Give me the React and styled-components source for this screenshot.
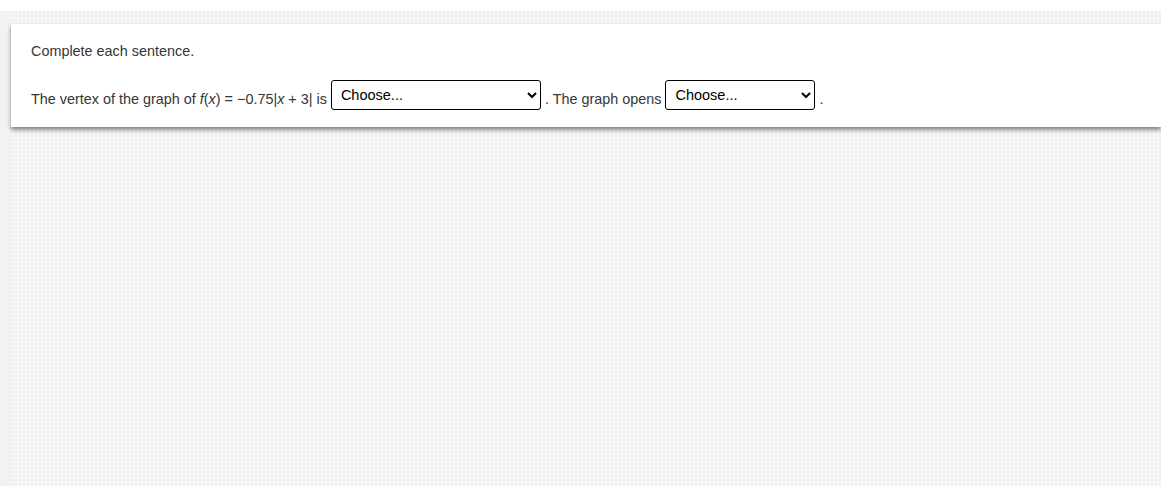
import React from 'react';
import styled, { createGlobalStyle } from 'styled-components';

const Global = createGlobalStyle`
html, body {
margin: 0;
padding: 0;
background: #ffffff;
}
body {
font-family: "Liberation Sans", Arial, sans-serif;
}
`

const Page = styled.div`
padding-top: 11px;
background: #ffffff;
height: 486px;
box-sizing: border-box;
overflow: hidden;
`

const Frame = styled.div`
display: flex;
height: 100%;
`

const Rail = styled.div`
width: 11px;
flex-shrink: 0;
background: #f2f2f2;
`

const Main = styled.div`
flex: 1;
padding-top: 12px;
background-color: #f4f4f4;
background-image:
  radial-gradient(circle at 1px 1px, #eeeeee 0.7px, transparent 1px),
  radial-gradient(circle at 3px 3px, #f9f9f9 0.7px, transparent 1px);
background-size: 4px 4px;
`

const Card = styled.div`
background: #ffffff;
padding: 19px 20px 17px 20px;
border-top: 1px solid #ececec;
box-shadow: 0 3px 4px rgba(0, 0, 0, 0.45);
color: #363636;
font-size: 14.4px;
`

const Prompt = styled.p`
margin: 0 0 20px 0;
line-height: 17px;
`

const Row = styled.div`
display: flex;
align-items: center;
white-space: pre;
line-height: 17px;
`

const Text = styled.span`
margin-top: 8px;
`

const Var = styled.i`
font-style: italic;
`

const Select = styled.select`
width: ${p => p.w}px;
height: 30px;
margin: 0 4px;
padding: 0 6px 0 5px;
border: 1px solid #000;
border-radius: 3px;
background: #fff;
color: #000;
font-family: "Liberation Sans", Arial, sans-serif;
font-size: 14.5px;
`

const Picker = ({ w }) => (
  <Select w={w} defaultValue="">
    <option value="">Choose...</option>
  </Select>
)

const App = () => (
  <Page>
    <Global />
    <Frame>
      <Rail />
      <Main>
        <Card>
          <Prompt>Complete each sentence.</Prompt>
          <Row>
            <Text>
              The vertex of the graph of <Var>f</Var>(<Var>x</Var>) = −0.75|<Var>x</Var> + 3| is
            </Text>
            <Picker w={210} />
            <Text>. The graph opens</Text>
            <Picker w={150} />
            <Text>.</Text>
          </Row>
        </Card>
      </Main>
    </Frame>
  </Page>
)

export default App
